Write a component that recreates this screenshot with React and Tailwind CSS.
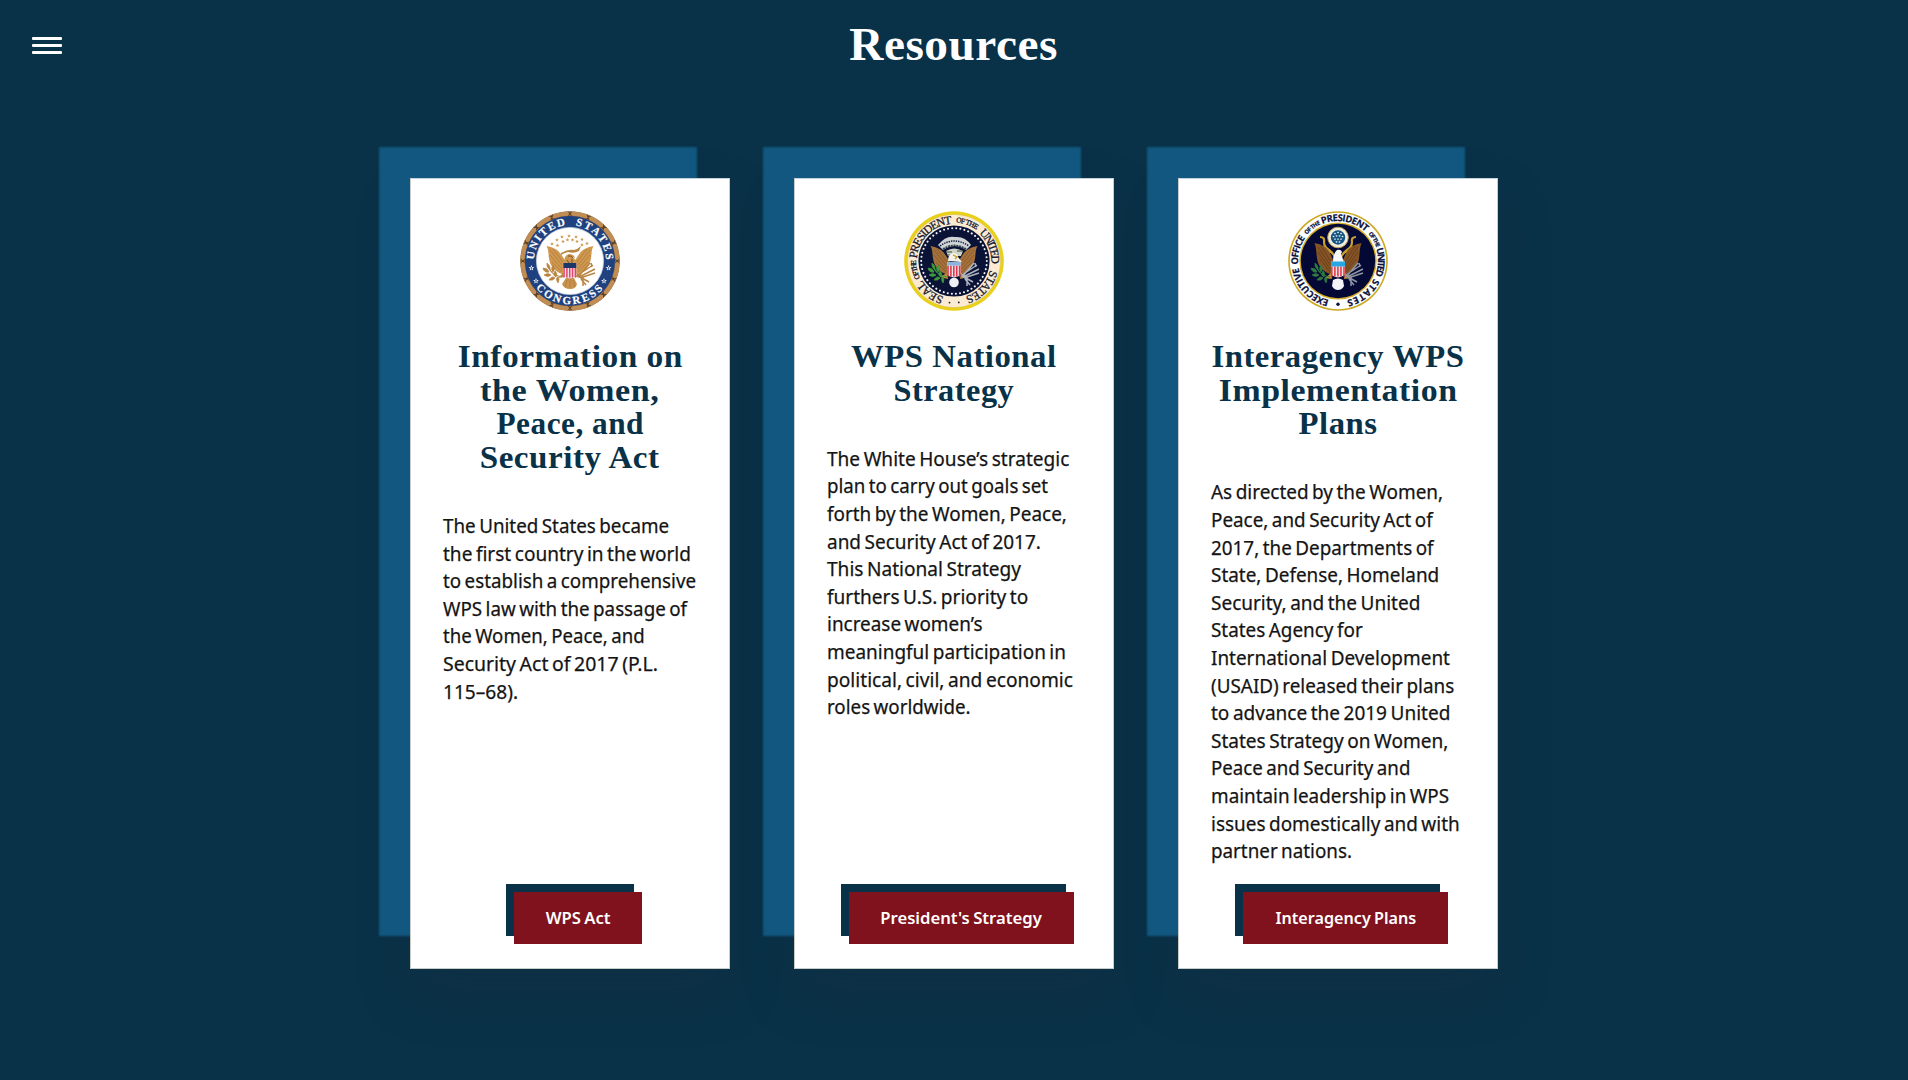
import { useLayoutEffect, useRef, useState } from "react";

const SANS = "font-['Noto_Sans','Open_Sans',sans-serif]";
const SERIF = "font-['Liberation_Serif',serif]";

/* One line of copy, condensed or widened to a fixed measure. */
function Line({ text, w, origin = "origin-left" }) {
  const ref = useRef(null);
  const [scale, setScale] = useState(1);
  useLayoutEffect(() => {
    setScale(w / ref.current.offsetWidth);
  }, [w]);
  return (
    <span
      ref={ref}
      className={`block w-max shrink-0 whitespace-nowrap ${origin}`}
      style={{ transform: `scaleX(${scale})` }}
    >
      {text}
    </span>
  );
}

const pt = (deg, r) => {
  const a = (deg * Math.PI) / 180;
  return [50 + r * Math.sin(a), 50 - r * Math.cos(a)];
};

/* Word set on a circle between two clockwise angles (0 = top). */
function ArcWord({ id, text, from, to, r, ...rest }) {
  const [x0, y0] = pt(from, r);
  const [x1, y1] = pt(to, r);
  const sweep = to > from ? 1 : 0;
  const span = Math.abs(to - from);
  const len = (span * Math.PI * r) / 180;
  return (
    <>
      <path id={id} fill="none" d={`M${x0} ${y0}A${r} ${r} 0 ${span > 180 ? 1 : 0} ${sweep} ${x1} ${y1}`} />
      <text {...rest}>
        <textPath href={`#${id}`} textLength={len * 0.985} lengthAdjust="spacing">{text}</textPath>
      </text>
    </>
  );
}

function Star({ x, y, s = 1.6, fill }) {
  const p = [];
  for (let i = 0; i < 10; i++) {
    const a = (i * Math.PI) / 5;
    const r = i % 2 ? s * 0.42 : s;
    p.push(`${x + r * Math.sin(a)},${y - r * Math.cos(a)}`);
  }
  return <polygon points={p.join(" ")} fill={fill} />;
}

function Shield({ x, y, w, h, chief, stripe, chiefH }) {
  return (
    <g>
      <path d={`M${x} ${y}h${w}v${h * 0.72}q0 ${h * 0.2} ${-w / 2} ${h * 0.28}q${-w / 2} ${-h * 0.08} ${-w / 2} ${-h * 0.28}z`} fill="#f7e3e6" />
      {[0, 1, 2, 3, 4].map((i) => (
        <rect key={i} x={x + (i * w) / 4.6} y={y + chiefH} width={w / 8.5} height={h * 0.94 - chiefH} fill={stripe} />
      ))}
      <rect x={x} y={y} width={w} height={chiefH} fill={chief} />
    </g>
  );
}

function Wings({ fill, line, top = 35 }) {
  const half = (
    <g>
      <path d={`M26.5 ${top}C32 ${top + 1} 38 ${top + 3} 41.5 ${top + 9}L46 51L45 64C37 62 31 57 29.5 50C28 44 29 39 26.5 ${top}Z`} fill={fill} />
      <path d={`M30 ${top + 4}L42 54M30 ${top + 9}L42 58M33 ${top + 3}L43 51M32 ${top + 16}L42 61`} stroke={line} strokeWidth=".6" fill="none" />
    </g>
  );
  return (
    <g>
      {half}
      <g transform="translate(100 0) scale(-1 1)">{half}</g>
    </g>
  );
}

function Olive({ fill }) {
  return (
    <g fill={fill} stroke={fill} strokeWidth=".7">
      <path d="M27 52q4 3 3 7q-4-3-3-7zM23 57q5 0 6 4q-5 1-6-4zM24 64q4-3 7 0q-3 3-7 0zM29 69q3-5 6-2q-2 3-6 2zM33 54q3 4 0 7q-3-3 0-7zM35 60q3 2 1 6q-4-2-1-6zM38 72q-3-5 0-6q2 2 0 6z" />
      <path d="M28 54q2 10 14 12" strokeWidth="1.2" fill="none" />
    </g>
  );
}

function Arrows({ stroke }) {
  return (
    <path d="M58 64L73 54M59 66L75 58M58 66L70 52M60 67L75 62M61 68L66 74M63 66L63 75M58 65L69 71M71 52l1 4M75 58l-4 2" stroke={stroke} strokeWidth="1.5" fill="none" />
  );
}

function CongressSeal() {
  const tan = "#cf9850";
  const stars = [[49, 25], [42, 26], [37, 29], [32, 33], [37.5, 34.5], [43, 30.5], [47.5, 29], [52.5, 29], [56, 26], [62, 28.5], [67, 32.5], [62, 34], [57, 30.5]];
  const word = { fill: "#fff", stroke: "#fff", strokeWidth: 0.2, fontFamily: "Liberation Serif", fontWeight: 700, fontSize: 11 };
  return (
    <svg viewBox="0 0 100 100" className="size-[100px]">
      <circle cx="50" cy="50" r="49.8" fill="#9a7043" />
      <circle cx="50" cy="50" r="47.4" fill="none" stroke="#c08d54" strokeWidth="4.2" />
      {Array.from({ length: 16 }, (_, i) => (
        <path key={i} transform={`rotate(${i * 22.5} 50 50)`} d="M48 .6L52 4.9M52 .6L48 4.9M50 .6V4.9" stroke="#573d27" strokeWidth=".9" />
      ))}
      <circle cx="50" cy="50" r="45" fill="#1f417f" />
      <circle cx="50" cy="50" r="33.6" fill="#fff" stroke="#c3cbdc" strokeWidth=".8" />
      <ArcWord id="cg-a" text="UNITED" from={-88} to={-6} r={36} {...word} />
      <ArcWord id="cg-b" text="STATES" from={9} to={89} r={36} {...word} />
      <ArcWord id="cg-c" text="CONGRESS" from={232} to={129} r={43.2} {...word} />
      <Star x={11.4} y={57} s={3} fill="#fff" /><Star x={88.6} y={57} s={3} fill="#fff" />
      <Star x={16} y={70} s={3} fill="#fff" /><Star x={84} y={70} s={3} fill="#fff" />
      <Star x={11.4} y={57} s={1.3} fill="#1f417f" /><Star x={88.6} y={57} s={1.3} fill="#1f417f" />
      <Star x={16} y={70} s={1.3} fill="#1f417f" /><Star x={84} y={70} s={1.3} fill="#1f417f" />
      {stars.map(([x, y], i) => <Star key={i} x={x} y={y} s={2} fill={tan} />)}
      <Wings fill={tan} line="#a87334" />
      <path d="M41 42Q48 38 54 39Q58 38 61 35L59 40Q54 43 48 41Q44 42 41 44z" fill="#b98543" />
      <path d="M44 52Q44 44 49 43Q54 43 55 47L53 46Q57 50 56 53z" fill={tan} />
      <path d="M48 45q3-1 5 2M47 49l2 3M52 48v4" stroke="#6e4925" strokeWidth=".9" fill="none" />
      <g fill="#b98543"><path d="M43 62L38 67L44 66zM57 62L62 67L56 66z" /></g>
      <path d="M46 67L42 73Q44 78 50 78Q56 78 57 73L54 67z" fill="#c9924d" />
      <path d="M50 68v9M47 69l-2 7M53 69l2 7" stroke="#9c6b32" strokeWidth=".5" />
      <Olive fill="#b98543" />
      <Arrows stroke="#b98543" />
      <Shield x={43.3} y={52} w={13} h={15.5} chief="#1d3668" chiefH={5} stripe="#dc4a73" />
    </svg>
  );
}

function PresidentSeal() {
  const big = { fill: "#171a2e", fontFamily: "Liberation Serif", fontSize: 11.6, stroke: "#171a2e", strokeWidth: 0.3 };
  const small = { ...big, fontSize: 7.4 };
  return (
    <svg viewBox="0 0 100 100" className="size-[100px]">
      <circle cx="50" cy="50" r="49.8" fill="#e9d01b" />
      <circle cx="50" cy="50" r="46.6" fill="#fcebd3" stroke="#d9bd3f" strokeWidth=".5" />
      <circle cx="50" cy="50" r="35.6" fill="#0a1235" />
      <circle cx="50" cy="50" r="32.8" fill="none" stroke="#eef1f6" strokeWidth="2" strokeLinecap="round" strokeDasharray=".1 4.02" />
      <ArcWord id="ps-a" text="SEAL" from={196} to={240} r={37.3} {...big} />
      <ArcWord id="ps-b" text="OF THE" from={243} to={272} r={38} {...small} />
      <ArcWord id="ps-c" text="PRESIDENT" from={274} to={358} r={37.3} {...big} />
      <ArcWord id="ps-d" text="OF THE" from={3} to={36} r={38.6} {...small} />
      <ArcWord id="ps-e" text="UNITED" from={42} to={95} r={37.3} {...big} />
      <ArcWord id="ps-f" text="STATES" from={104} to={163} r={37.3} {...big} />
      <circle cx="45.5" cy="91.6" r=".9" fill="#171a2e" /><circle cx="54.8" cy="91.4" r=".9" fill="#171a2e" />
      <path d="M34 34Q42 24 51 26Q61 25 67 34L62 39Q51 31 39 39z" fill="#cfd3d5" />
      <path d="M36 35Q50 25 65 35" stroke="#14203a" strokeWidth="1.5" strokeDasharray="1.4 1" fill="none" />
      <path d="M39 38Q50 31 62 38" stroke="#31414a" strokeWidth="1.8" strokeDasharray="2 .8" fill="none" />
      <Wings fill="#a4713b" line="#7d4f25" />
      <path d="M42 40Q50 35 59 40L57 45H44z" fill="#cfd5c7" />
      <path d="M42 41h6M53 40h6M43 44h4" stroke="#3d493c" strokeWidth="1" />
      <path d="M44 50Q44 43 49 42Q54 42 54 46L58 51z" fill="#f3f1e8" />
      <path d="M49 44l4 2l-2 2" stroke="#c29b29" strokeWidth="1.3" fill="none" />
      <path d="M43 62L36 66L44 68zM57 62L64 66L56 68z" fill="#c68f35" />
      <circle cx="50" cy="71.5" r="4.8" fill="#eef0f5" />
      <g transform="translate(1 0)"><Olive fill="#3f9a3d" /></g>
      <Arrows stroke="#aeb4bf" />
      <Shield x={43.2} y={51} w={13.4} h={15.5} chief="#8ab5e0" chiefH={3.6} stripe="#d8394f" />
    </svg>
  );
}

function ExecutiveSeal() {
  const big = { fill: "#0c1240", stroke: "#0c1240", strokeWidth: 0.2, fontFamily: "Open Sans", fontWeight: 700, fontSize: 9.4 };
  const small = { ...big, fontSize: 5.8 };
  const dots = [[47, 22.5], [50, 21.5], [53, 22.5], [45.5, 25.5], [48.5, 25], [51.5, 25], [54.5, 25.5], [47, 28.2], [50, 28.2], [53, 28.2], [48.5, 31], [51.5, 31]];
  return (
    <svg viewBox="0 0 100 100" className="size-[100px]">
      <circle cx="50" cy="50" r="49.8" fill="#cda71f" />
      <circle cx="50" cy="50" r="48.2" fill="#fff" />
      <circle cx="50" cy="50" r="38.6" fill="#d3ab2a" />
      <circle cx="50" cy="50" r="37.2" fill="#030834" />
      <ArcWord id="ex-a" text="EXECUTIVE" from={193} to={261} r={40} {...big} />
      <ArcWord id="ex-b" text="OFFICE" from={265} to={306} r={40} {...big} />
      <ArcWord id="ex-c" text="OF THE" from={310} to={335} r={40.8} {...small} />
      <ArcWord id="ex-d" text="PRESIDENT" from={337} to={404} r={40} {...big} />
      <ArcWord id="ex-e" text="OF THE" from={48} to={71} r={40.8} {...small} />
      <ArcWord id="ex-f" text="UNITED" from={72} to={112} r={40} {...big} />
      <ArcWord id="ex-g" text="STATES" from={116} to={168} r={40} {...big} />
      <circle cx="50" cy="93.2" r="1.7" fill="#0c1240" />
      <path d="M32 26q5 0 4 5q0 5 5 8q4 3 6 7M68 26q-5 0-4 5q0 5-5 8q-4 3-6 7M34 36q5 1 8 6M66 36q-5 1-8 6" stroke="#c9a02d" strokeWidth="2.2" fill="none" />
      <circle cx="50" cy="26.5" r="10.3" fill="#f2eedf" stroke="#bfa256" strokeWidth="1" />
      <circle cx="50" cy="26.5" r="7.2" fill="#14537f" />
      {dots.map(([x, y], i) => <Star key={i} x={x} y={y} s={1.3} fill="#eaf4fa" />)}
      <Wings fill="#855426" line="#5a3416" top={32} />
      <path d="M45 51Q45 42 49 39Q53 38 54 41L53 43L56 51z" fill="#f5f6f8" />
      <path d="M43 62L37 67L44 68zM57 62L64 67L56 68z" fill="#c08a33" />
      <path d="M45 69q5-3 10 0l1 6q-2 4-6 4t-6-4z" fill="#f3f4f7" />
      <Olive fill="#2f7a40" />
      <Arrows stroke="#8f969f" />
      <Shield x={43} y={50.5} w={14} h={16} chief="#27a7e4" chiefH={5} stripe="#dc4552" />
    </svg>
  );
}

const cards = [
  {
    seal: CongressSeal,
    title: [["Information on", 225.5], ["the Women,", 179], ["Peace, and", 147], ["Security Act", 179.5]],
    body: [
      ["The United States became", 226.5], ["the first country in the world", 247.5], ["to establish a comprehensive", 253.5],
      ["WPS law with the passage of", 244], ["the Women, Peace, and", 202], ["Security Act of 2017 (P.L.", 215], ["115–68).", 75.5],
    ],
    action: ["WPS Act", 64.5],
    button: "w-[128px]",
  },
  {
    seal: PresidentSeal,
    title: [["WPS National", 206], ["Strategy", 121]],
    body: [
      ["The White House’s strategic", 242], ["plan to carry out goals set", 221.5], ["forth by the Women, Peace,", 239.5],
      ["and Security Act of 2017.", 213.5], ["This National Strategy", 194.5], ["furthers U.S. priority to", 201],
      ["increase women’s", 155], ["meaningful participation in", 239], ["political, civil, and economic", 246], ["roles worldwide.", 143.5],
    ],
    action: ["President's Strategy", 161.5],
    button: "mr-px w-[225px]",
  },
  {
    seal: ExecutiveSeal,
    title: [["Interagency WPS", 253], ["Implementation", 238.5], ["Plans", 79]],
    body: [
      ["As directed by the Women,", 232], ["Peace, and Security Act of", 221.5], ["2017, the Departments of", 222.5],
      ["State, Defense, Homeland", 228], ["Security, and the United", 209], ["States Agency for", 152],
      ["International Development", 238.5], ["(USAID) released their plans", 243.5], ["to advance the 2019 United", 239.5],
      ["States Strategy on Women,", 237], ["Peace and Security and", 199], ["maintain leadership in WPS", 238.5],
      ["issues domestically and with", 249], ["partner nations.", 141],
    ],
    action: ["Interagency Plans", 141],
    button: "mr-px w-[205px]",
  },
];

function Card({ seal: Seal, title, body, action, button }) {
  return (
    <article className="flex h-[791px] w-[320px] flex-col border border-[#c9cdca] border-t-[#c4d3dc] bg-white px-8 pt-8 pb-6 shadow-[-32px_-32px_2px_-1px_#12577f,0_24px_48px_0_rgba(30,45,65,0.3)]">
      <div className="flex justify-center"><Seal /></div>
      <h2 className={`mt-[29px] text-[31.5px] leading-[33.6px] font-bold tracking-[0.5px] text-[#093147] ${SERIF}`}>
        {title.map(([t, w]) => (
          <span key={t} className="flex justify-center"><Line text={t} w={w} origin="origin-center" /></span>
        ))}
      </h2>
      <p className={`mt-[37.6px] text-[20px] leading-[27.6px] text-[#141414] [-webkit-text-stroke:0.25px_#141414] [word-spacing:-1.5px] ${SANS}`}>
        {body.map(([t, w]) => <Line key={t} text={t} w={w} />)}
      </p>
      <div className="mt-auto flex justify-center pl-4">
        <button className={`flex h-[52px] items-center justify-center bg-[#7f121d] text-[16.5px] leading-none font-semibold text-white shadow-[-8px_-8px_0_0_#093147] [word-spacing:-1px] ${button} ${SANS}`}>
          <Line text={action[0]} w={action[1]} origin="origin-center" />
        </button>
      </div>
    </article>
  );
}

export default function App() {
  return (
    <div className="flex h-[1080px] w-full flex-col overflow-hidden bg-[#093147]">
      <header className="grid h-[90px] shrink-0 grid-cols-3 items-center px-8">
        <button aria-label="Menu" className="flex w-[30px] flex-col gap-1">
          <span className="h-[3px] rounded-[1px] bg-white" />
          <span className="h-[3px] rounded-[1px] bg-white" />
          <span className="h-[3px] rounded-[1px] bg-white" />
        </button>
        <h1 className={`flex justify-center pb-px text-[46.5px] leading-[88px] font-bold tracking-[0.5px] text-white ${SERIF}`}>
          <Line text="Resources" w={208.5} origin="origin-center" />
        </h1>
      </header>
      <main className="mt-[88px] flex justify-center gap-16">
        {cards.map((c) => <Card key={c.action[0]} {...c} />)}
      </main>
    </div>
  );
}
